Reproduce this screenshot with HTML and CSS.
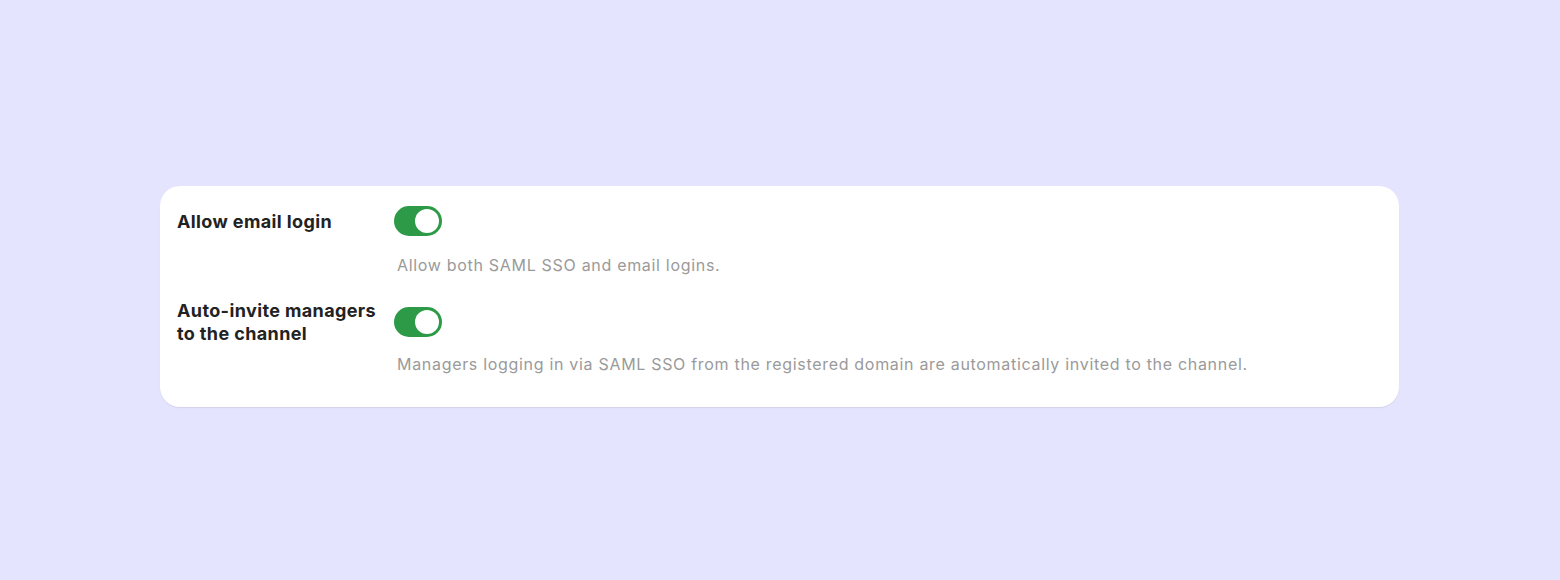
FILE: index.html
```html
<!DOCTYPE html>
<html lang="en">
<head>
<meta charset="utf-8">
<title>Login settings</title>
<link rel="stylesheet" href="styles.css">
</head>
<body>
<main class="page">
  <section class="card">
    <div class="setting">
      <div class="setting-head">
        <span class="setting-label">Allow email login</span>
        <span class="toggle is-on" role="switch" aria-checked="true"><span class="knob"></span></span>
      </div>
      <p class="setting-desc">Allow both SAML SSO and email logins.</p>
    </div>
    <div class="setting setting-second">
      <div class="setting-head">
        <span class="setting-label">Auto-invite managers to the channel</span>
        <span class="toggle is-on" role="switch" aria-checked="true"><span class="knob"></span></span>
      </div>
      <p class="setting-desc setting-desc-tight">Managers logging in via SAML SSO from the registered domain are automatically invited to the channel.</p>
    </div>
  </section>
</main>
</body>
</html>
```

FILE: styles.css
```css
* { box-sizing: border-box; }

html, body {
  margin: 0;
  padding: 0;
}

body {
  background: #e4e4fe;
  font-family: Inter, "Noto Sans", "Liberation Sans", sans-serif;
  width: 1560px;
  height: 580px;
  overflow: hidden;
}

.page {
  padding: 186px 161px 0 160px;
}

.card {
  background: #ffffff;
  border-radius: 20px;
  box-shadow: 0 1px 1px rgba(0, 0, 0, 0.08);
  padding: 20px 16px 0 17px;
  height: 221px;
}

.setting-second {
  margin-top: 24px;
}

.setting-head {
  display: flex;
  align-items: center;
  gap: 10px;
  min-height: 30px;
}

.setting-label {
  width: 207px;
  font-size: 18px;
  font-weight: 700;
  line-height: 23px;
  letter-spacing: 0.38px;
  color: #222222;
}

.toggle {
  width: 48px;
  height: 30px;
  border-radius: 15px;
  background: #2d9a47;
  display: flex;
  align-items: center;
  justify-content: flex-end;
  padding: 0 3px;
  flex: none;
}

.knob {
  width: 24px;
  height: 24px;
  border-radius: 50%;
  background: #ffffff;
}

.setting-desc {
  margin: 19px 0 0 220px;
  font-size: 16px;
  line-height: 20px;
  letter-spacing: 0.69px;
  color: #9a9a9a;
}

.setting-desc-tight {
  margin-top: 9px;
}
```
